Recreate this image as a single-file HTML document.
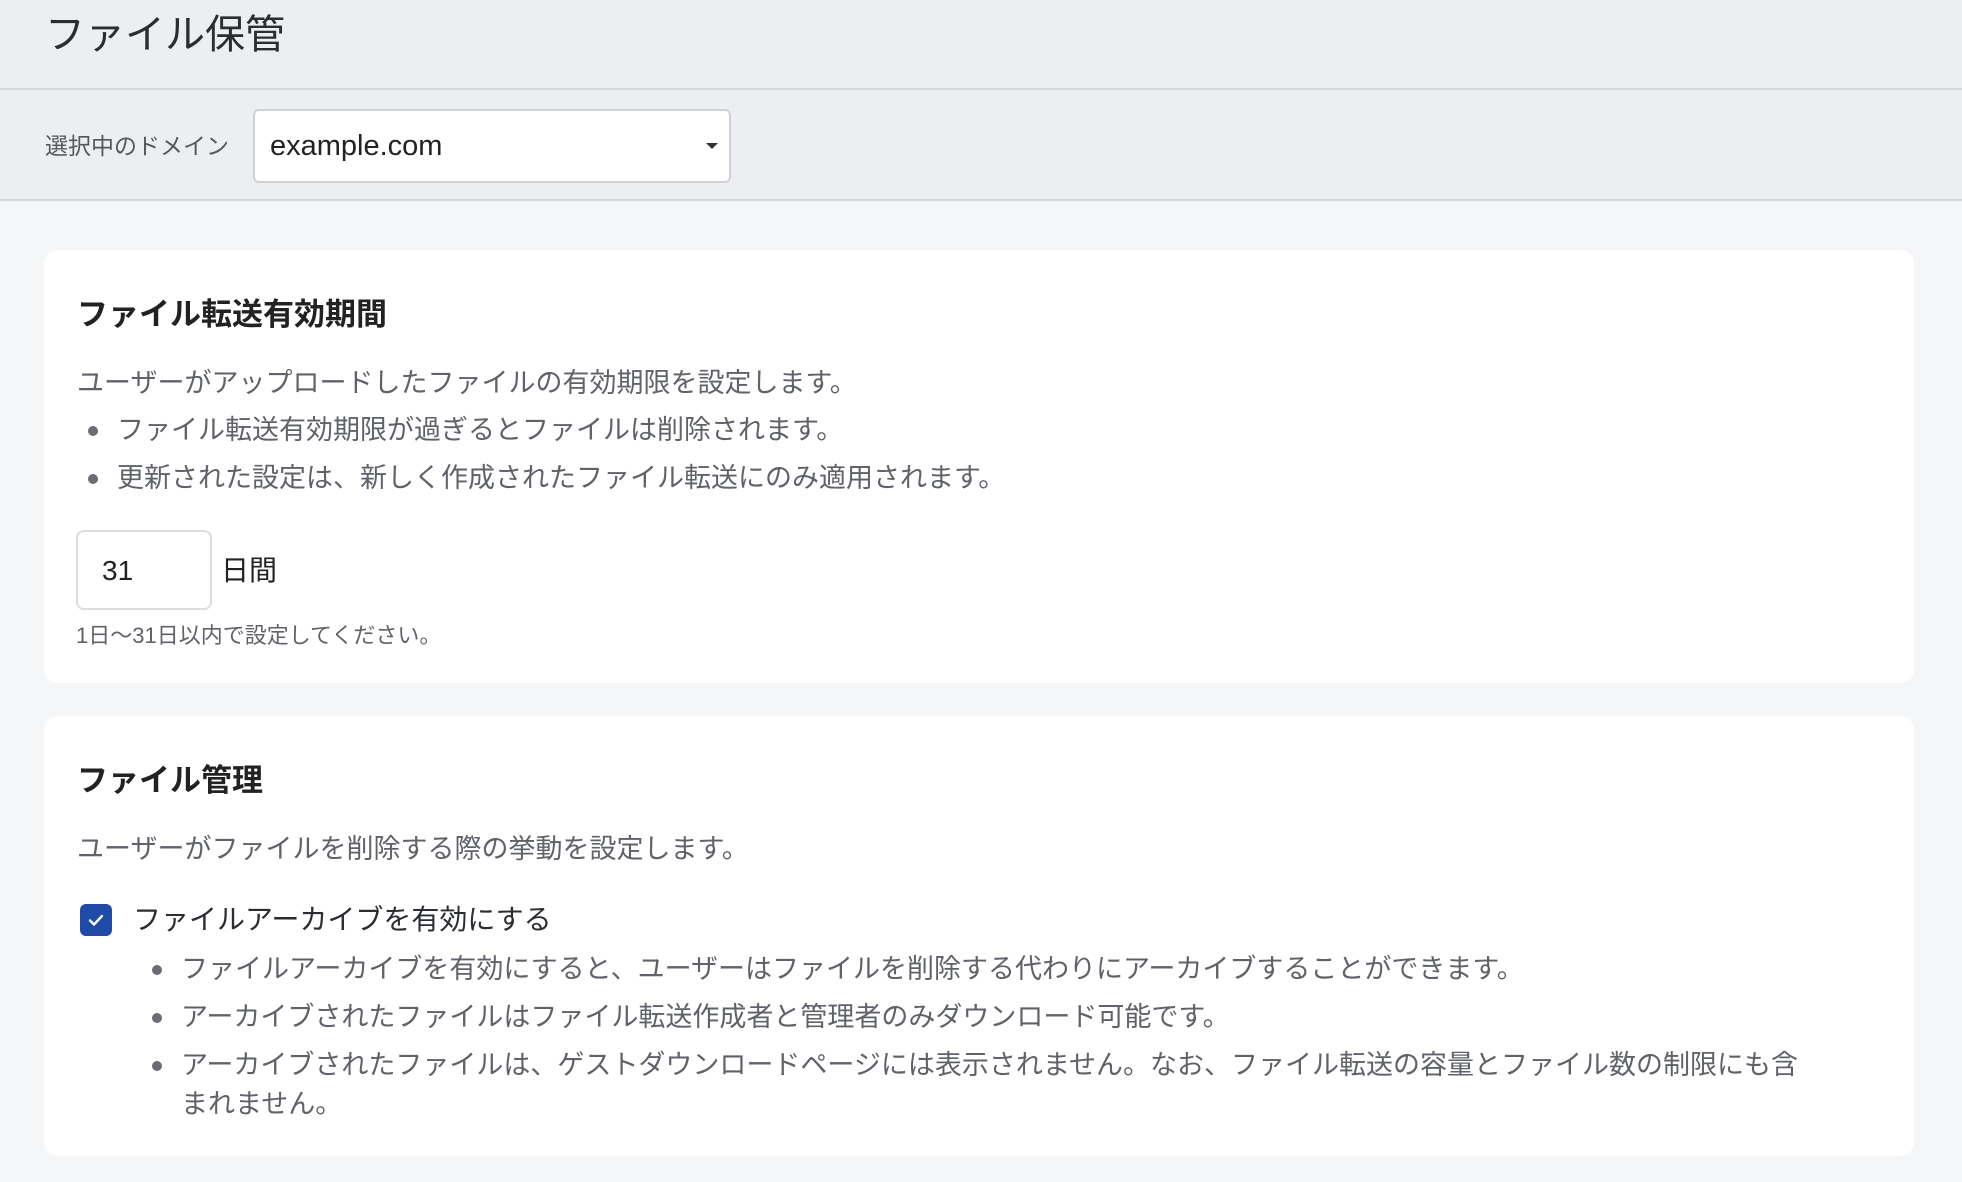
<!DOCTYPE html>
<html><head><meta charset="utf-8"><style>
*{margin:0;padding:0;box-sizing:border-box}
body{width:1962px;height:1182px;background:#f5f6f8;font-family:"Liberation Sans","Noto Sans CJK JP",sans-serif;position:relative;overflow:hidden;color:#25282c}
.a{position:absolute;white-space:nowrap}
.hdr{position:absolute;left:0;top:0;width:1962px;height:90px;background:#edeef2;border-bottom:2px solid #d4d6da}
.bar{position:absolute;left:0;top:90px;width:1962px;height:111px;background:#edeef2;border-bottom:2px solid #d4d6da}
.card{position:absolute;left:44px;width:1870px;background:#fff;border-radius:14px}
.g{color:#5f6268}
.dot{position:absolute;width:10px;height:10px;border-radius:50%;background:#6a6d72}
</style></head><body>
<div class="hdr"></div>
<div class="a" style="left:45px;top:10px;font-size:40px;line-height:50px;color:#2a2d31">ファイル保管</div>
<div class="bar"></div>
<div class="a g" style="left:45px;top:131px;font-size:23px;line-height:30px;color:#55585d">選択中のドメイン</div>
<div style="position:absolute;left:253px;top:109px;width:478px;height:74px;background:#fff;border:2px solid #cfd1d5;border-radius:6px"></div>
<div class="a" style="left:270px;top:128px;font-size:29px;line-height:36px;color:#222">example.com</div>
<div style="position:absolute;left:706px;top:143px;width:0;height:0;border-left:6px solid transparent;border-right:6px solid transparent;border-top:6px solid #333"></div>

<div class="card" style="top:250px;height:433px"></div>
<div class="a" style="left:77px;top:295px;font-size:31px;line-height:40px;font-weight:bold;color:#222">ファイル転送有効期間</div>
<div class="a g" style="left:77px;top:366px;font-size:27px;line-height:34px">ユーザーがアップロードしたファイルの有効期限を設定します。</div>
<div class="dot" style="left:88px;top:426px"></div>
<div class="a g" style="left:117px;top:413px;font-size:27px;line-height:34px">ファイル転送有効期限が過ぎるとファイルは削除されます。</div>
<div class="dot" style="left:88px;top:474px"></div>
<div class="a g" style="left:117px;top:461px;font-size:27px;line-height:34px">更新された設定は、新しく作成されたファイル転送にのみ適用されます。</div>
<div style="position:absolute;left:76px;top:530px;width:136px;height:80px;border:2px solid #dcdde0;border-radius:8px;background:#fff"></div>
<div class="a" style="left:102px;top:554px;font-size:28px;line-height:34px;color:#222">31</div>
<div class="a" style="left:221px;top:554px;font-size:28px;line-height:34px;color:#222">日間</div>
<div class="a g" style="left:76px;top:622px;font-size:22px;line-height:28px">1日〜31日以内で設定してください。</div>

<div class="card" style="top:716px;height:440px"></div>
<div class="a" style="left:77px;top:761px;font-size:31px;line-height:40px;font-weight:bold;color:#222">ファイル管理</div>
<div class="a g" style="left:77px;top:832px;font-size:27px;line-height:34px">ユーザーがファイルを削除する際の挙動を設定します。</div>
<div style="position:absolute;left:80px;top:904px;width:32px;height:32px;background:#1f4aa8;border-radius:6px"></div>
<svg class="a" style="left:80px;top:904px" width="32" height="32" viewBox="0 0 32 32"><path d="M10 16.5l4 4 8-8.5" fill="none" stroke="#fff" stroke-width="2.4" stroke-linecap="round" stroke-linejoin="round"/></svg>
<div class="a" style="left:133px;top:903px;font-size:28px;line-height:34px;color:#2a2d31">ファイルアーカイブを有効にする</div>
<div class="dot" style="left:152px;top:965px"></div>
<div class="a g" style="left:181px;top:952px;font-size:27px;line-height:34px">ファイルアーカイブを有効にすると、ユーザーはファイルを削除する代わりにアーカイブすることができます。</div>
<div class="dot" style="left:152px;top:1013px"></div>
<div class="a g" style="left:181px;top:1000px;font-size:27px;line-height:34px">アーカイブされたファイルはファイル転送作成者と管理者のみダウンロード可能です。</div>
<div class="dot" style="left:152px;top:1061px"></div>
<div class="a g" style="left:181px;top:1048px;font-size:27px;line-height:34px">アーカイブされたファイルは、ゲストダウンロードページには表示されません。なお、ファイル転送の容量とファイル数の制限にも含</div>
<div class="a g" style="left:181px;top:1087px;font-size:27px;line-height:34px">まれません。</div>
</body></html>
